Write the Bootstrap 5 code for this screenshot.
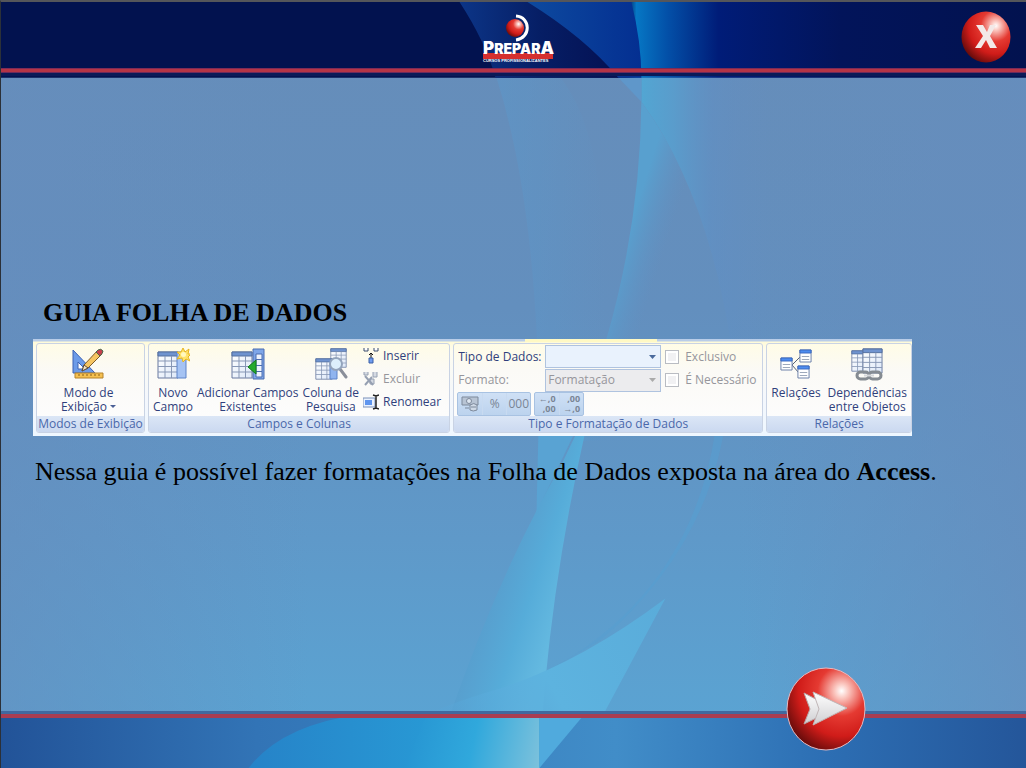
<!DOCTYPE html>
<html lang="pt-BR">
<head>
<meta charset="utf-8">
<meta name="viewport" content="width=device-width, initial-scale=1">
<title>Guia Folha de Dados</title>
<link href="https://cdn.jsdelivr.net/npm/bootstrap@5.3.0/dist/css/bootstrap.min.css" rel="stylesheet">
<style>
  body { font-family: "Liberation Serif", serif; color: #000; background: #5f96c6; }
  .page { border-top: 2px solid #55565a; border-left: 1px solid #2b3038; box-shadow: inset 1px 0 #8fabd0, inset -1px 0 #a9bedb; isolation: isolate; }
  .backdrop { inset: 0; z-index: -1; }
  .top-bar { height: 74px; padding: 9px 15px 0 23px; border-bottom: 3px solid #0a1a58; }
  .top-bar > * { flex: 1 1 0; }
  .top-rule { height: 5px; background: linear-gradient(#7d2b57 1px, #b43446 1px, #b43446 4px, #6d2a5c 4px); bottom: 0; left: 0; right: 0; }
  .bottom-bar { height: 57px; border-top: 3px solid #41699f; }
  .bottom-rule { height: 4px; background: #aa3d51; }
  .round-btn { background: none; border: 0; padding: 0; line-height: 0; }
  .next-btn { right: 160px; bottom: 17px; }
  .content { padding: 0 33px 2px 32px; }
  .lesson-title { font-size: 26px; line-height: 30px; padding-left: 10px; margin: 0 0 11px; font-weight: 700; }
  .lesson-text { font-size: 26px; line-height: 32px; margin: 20px 0 0 2px; }
  .ribbon { max-width: 879px; padding: 4px 0 3px 3px; gap: 3px; background: linear-gradient(#b9cde8 2px, #fffbd8 3px, #fdfcf0 12px, #f4f7fc 60%, #eef7ff); font: 12px/14px "Open Sans", "Noto Sans", sans-serif; color: #2f3f7c; }
  .ribbon:before { content: ""; position: absolute; top: 0; left: 56%; width: 15%; height: 3px; background: #fff9c4; }
  .group { border: 1px solid #c9d3e4; border-radius: 3px; background: linear-gradient(#fffce6, #fbfaf6 30%, #fdfdfe); overflow: hidden; }
  .group-body { height: 72px; }
  .group-name { height: 16px; line-height: 16px; background: linear-gradient(#dbe6f6, #cbd9f0); color: #4a68aa; text-align: center; }
  .g1 { flex: 108 1 0; } .g2 { flex: 303 1 0; } .g3 { flex: 311 1 0; } .g4 { flex: 145 1 0; }
  .group button { border: 0; background: none; padding: 0; color: inherit; font: inherit; white-space: nowrap; }
  .group button:disabled, .off { color: #96969c; }
  .big { padding-top: 4px !important; }
  .big svg { display: block; margin: 0 auto 6px; }
  .small-cmds { padding-top: 1px; }
  .small-cmds button { height: 23px; display: flex; align-items: center; gap: 4px; }
  .fields { display: grid; grid-template-columns: 87px 116px 1fr; grid-template-rows: 24px 23px; align-items: center; padding: 1px 0 0 4px; }
  .fields select { appearance: none; width: 116px; height: 23px; padding: 0 2px; border: 1px solid #afc3df; border-radius: 0; font: inherit; color: inherit; background: #e9f2fd url("data:image/svg+xml,%3Csvg xmlns='http://www.w3.org/2000/svg' width='7' height='4'%3E%3Cpath d='M0 0h7L3.500 4z' fill='%234a6a9c'/%3E%3C/svg%3E") no-repeat right 4px center; }
  .fields select:disabled { color: #96969c; opacity: 1; background-color: #ececee; background-image: url("data:image/svg+xml,%3Csvg xmlns='http://www.w3.org/2000/svg' width='7' height='4'%3E%3Cpath d='M0 0h7L3.500 4z' fill='%23aaaaaa'/%3E%3C/svg%3E"); }
  .tick { gap: 6px; padding-left: 4px; color: #96969c; }
  .tick input { appearance: none; width: 14px; height: 14px; margin: 0; border: 1px solid #b9bcc2; background: #f1f1f3; box-shadow: inset 0 0 0 2px #fff; }
  .formats { gap: 3px; padding-left: 3px; }
  .formats > div { height: 24px; display: flex; border: 1px solid #a8c2e2; border-radius: 2px; background: linear-gradient(#cfe0f5, #bcd3ee); }
  .formats button { width: 24px; display: flex; align-items: center; justify-content: center; color: #7a8595 !important; }
  .formats button + button { border-left: 1px solid #c8daf0; }
  .formats .digits { font-size: 9px; line-height: 10px; font-weight: 700; text-align: right; display: block; }
</style>
</head>
<body>
<svg width="0" height="0" class="position-absolute" aria-hidden="true">
  <defs>
    <radialGradient id="ball" cx=".7" cy=".28" r=".85">
      <stop offset="0" stop-color="#fff"/><stop offset=".1" stop-color="#fbc9c2"/><stop offset=".36" stop-color="#e53a32"/><stop offset=".65" stop-color="#d01c19"/><stop offset="1" stop-color="#4d0808"/>
    </radialGradient>
    <linearGradient id="steel" x1="0" x2="0" y1="0" y2="1"><stop offset="0" stop-color="#fff"/><stop offset="1" stop-color="#cfcfd2"/></linearGradient>
    <linearGradient id="paper" x1="0" x2="1" y1="0" y2="1"><stop offset="0" stop-color="#fff"/><stop offset="1" stop-color="#dde8f8"/></linearGradient>
    <symbol id="grid" viewBox="0 0 22 28" preserveAspectRatio="none">
      <path d="M1 1h20v26H1z" fill="url(#paper)" stroke="#68799f"/><path d="M1 1h20v4H1z" fill="#6f93cf" stroke="#54709f"/>
      <path d="M1 10h20M1 15.500h20M1 21h20M8 5v22M14.500 5v22" stroke="#8797b5"/>
    </symbol>
    <symbol id="win" viewBox="0 0 14 14" preserveAspectRatio="none"><path d="M1 1h12v12H1z" fill="#fff" stroke="#6a7fa8"/><path d="M1 1h12v3H1z" fill="#4d8df0" stroke="#3a68c0"/><path d="M3 7.500h8M3 10.500h8" stroke="#9aa6b8"/></symbol>
  </defs>
</svg>

<div class="page min-vh-100 d-flex flex-column position-relative">
  <svg class="backdrop position-absolute w-100 h-100" viewBox="0 0 1026 768" preserveAspectRatio="none" aria-hidden="true">
    <defs>
      <linearGradient id="sky" x1="0" x2="0" y1="0" y2="1"><stop offset="0" stop-color="#668db9"/><stop offset=".4" stop-color="#638fbe"/><stop offset=".7" stop-color="#5f99c9"/><stop offset="1" stop-color="#59a6d5"/></linearGradient>
      <linearGradient id="side"><stop offset="0" stop-color="#668dbd" stop-opacity=".6"/><stop offset=".3" stop-color="#668dbd" stop-opacity="0"/><stop offset=".72" stop-color="#668dbd" stop-opacity="0"/><stop offset="1" stop-color="#668dbd" stop-opacity=".7"/></linearGradient>
      <linearGradient id="night" gradientUnits="userSpaceOnUse" x1="0" x2="1026" y1="0" y2="0"><stop offset="0" stop-color="#02124f"/><stop offset=".61" stop-color="#02124f"/><stop offset=".62" stop-color="#0677c4"/><stop offset=".65" stop-color="#0350a8"/><stop offset=".7" stop-color="#001c78"/><stop offset=".82" stop-color="#02145a"/><stop offset="1" stop-color="#02124f"/></linearGradient>
      <linearGradient id="wedge" x1="0" x2="1" y1="0" y2="0"><stop offset="0" stop-color="#0c3587"/><stop offset=".5" stop-color="#061e65"/><stop offset="1" stop-color="#041052"/></linearGradient>
      <linearGradient id="blue" x1="0" x2="1" y1="0" y2="0"><stop offset="0" stop-color="#0d4a9f"/><stop offset="1" stop-color="#042f91"/></linearGradient>
      <linearGradient id="glow" gradientUnits="userSpaceOnUse" x1="641" x2="770" y1="0" y2="0"><stop offset="0" stop-color="#52a6d3"/><stop offset=".25" stop-color="#57a0d0" stop-opacity=".8"/><stop offset=".55" stop-color="#5f90c6" stop-opacity=".5"/><stop offset="1" stop-color="#638dc2" stop-opacity="0"/></linearGradient>
      <linearGradient id="streak"><stop offset="0" stop-color="#5b98cb" stop-opacity=".5"/><stop offset="1" stop-color="#5b98cb" stop-opacity="0"/></linearGradient>
      <linearGradient id="band" gradientUnits="userSpaceOnUse" x1="622" x2="660" y1="250" y2="262"><stop offset="0" stop-color="#58a0cf"/><stop offset="1" stop-color="#5e93c6" stop-opacity="0"/></linearGradient>
      <linearGradient id="sail" gradientUnits="userSpaceOnUse" x1="470" x2="560" y1="580" y2="610"><stop offset="0" stop-color="#5797c8" stop-opacity=".7"/><stop offset=".65" stop-color="#56acd9"/><stop offset="1" stop-color="#64b9e0"/></linearGradient>
      <linearGradient id="fin" gradientUnits="userSpaceOnUse" x1="420" x2="660" y1="730" y2="600"><stop offset="0" stop-color="#56a2d6" stop-opacity=".1"/><stop offset=".5" stop-color="#5db3df"/><stop offset="1" stop-color="#5aacda"/></linearGradient>
      <linearGradient id="floor"><stop offset="0" stop-color="#225398"/><stop offset=".25" stop-color="#3274b6"/><stop offset=".6" stop-color="#418dc8"/><stop offset=".8" stop-color="#2d6fb4"/><stop offset="1" stop-color="#24569a"/></linearGradient>
      <linearGradient id="pool" gradientUnits="userSpaceOnUse" x1="250" x2="450" y1="0" y2="0"><stop offset="0" stop-color="#2683c8"/><stop offset="1" stop-color="#289bd6"/></linearGradient>
      <linearGradient id="foam" gradientUnits="userSpaceOnUse" x1="405" x2="539" y1="730" y2="760"><stop offset="0" stop-color="#2694d2"/><stop offset=".5" stop-color="#30a8dc"/><stop offset="1" stop-color="#7bc1dc"/></linearGradient>
    </defs>
    <path d="M0 0h1026v768H0z" fill="url(#sky)"/><path d="M0 76h1026v640H0z" fill="url(#side)"/>
    <path d="M496 76Q545 230 538 510L600 400Q620 150 560 76z" fill="url(#streak)"/>
    <path d="M641 76H790V338H730Q706 189 641 100z" fill="url(#glow)"/>
    <path d="M641 100Q640 220 606 338L580 440H740L730 338Q706 189 641 100z" fill="url(#band)"/>
    <path d="M618 76L641 76V100z" fill="#5f97ca"/>
    <path d="M728 338Q740 520 600 640L530 680Q690 600 715 430z" fill="#579fd0" opacity=".6"/>
    <path d="M538 430H575L536 512z" fill="#59a3d3"/>
    <path d="M585 430Q556 560 545 680L542 716H449Q500 570 560 466L577 430z" fill="url(#sail)"/>
    <path d="M665 598Q580 662 500 688Q440 706 425 716H602z" fill="url(#fin)"/>
    <path d="M0 0H1026V76H0z" fill="url(#night)"/>
    <path d="M459 0H530Q590 34 620 76H495Q485 40 459 0z" fill="url(#wedge)"/>
    <path d="M527 0H631Q641 40 641 76H618Q585 36 527 0z" fill="url(#blue)"/>
    <path d="M0 714H1026V768H0z" fill="url(#floor)"/>
    <path d="M248 768Q280 725 360 714H560L539 768z" fill="url(#pool)"/>
    <path d="M404 768L426 714H539V768z" fill="url(#foam)"/>
    <path d="M539 714H584L539 768z" fill="#50aadd"/>
  </svg>

  <header class="top-bar d-flex align-items-start position-relative">
    <span></span>
    <div class="text-center lh-1">
      <svg width="74" height="52" viewBox="0 0 74 52" role="img" aria-label="Prepara Cursos Profissionalizantes">
        <circle cx="34" cy="17" r="9" fill="url(#ball)"/>
        <path d="M35 5C50 6 50 27 35 29" fill="none" stroke="#fff" stroke-width="3"/>
        <path d="M2 42h70v6H2z" fill="#d5302f"/>
        <text x="2" y="43" font-family="Inter, Liberation Sans, sans-serif" font-weight="900" fill="#fff" font-size="17">P<tspan font-size="14">REPAR</tspan>A</text>
        <text x="2" y="51" font-family="Liberation Sans, sans-serif" font-weight="700" fill="#fff" font-size="4">CURSOS PROFISSIONALIZANTES</text>
      </svg>
    </div>
    <div class="text-end">
      <button class="round-btn" type="button" aria-label="Fechar">
        <svg width="50" height="52" viewBox="0 0 50 52"><ellipse cx="25" cy="26" rx="24.500" ry="25.500" fill="url(#ball)"/><path d="M15 14h7l4 7 3-7h6l-6 11 7 12h-7l-4-8-5 8h-6l8-12z" fill="#f3e9e8"/></svg>
      </button>
    </div>
    <div class="top-rule position-absolute"></div>
  </header>

  <main class="content flex-grow-1 d-flex flex-column justify-content-center">
    <h1 class="lesson-title">GUIA FOLHA DE DADOS</h1>

    <div class="ribbon d-flex position-relative w-100">
      <section class="group g1">
        <div class="group-body d-flex justify-content-center align-items-start pe-1">
          <button class="big" type="button">
            <svg width="34" height="32" viewBox="0 0 34 32"><path d="M2 2v23h22z" fill="#6c9be8" stroke="#3d62b4"/><path d="M7 14v7h7z" fill="#fff" stroke="#3d62b4"/><path d="M4 25h28v5H4z" fill="#f5c050" stroke="#b5822a"/><path d="M8 26v2M12 26v2M16 26v2M20 26v2M24 26v2M28 26v2" stroke="#8a601a"/><path d="M11 23l2-6L27 2l4 4L17 20z" fill="#f6c562" stroke="#7d5a2a"/><path d="M11 23l2-6 4 3z" fill="#f7e3c0" stroke="#5a4a3a"/><path d="M25 4l2-2q3-2 5 1 0 2-3 5z" fill="#c8404c" stroke="#476a4c"/></svg>
            Modo de<br>Exibição <svg class="d-inline m-0" width="6" height="8" viewBox="0 0 6 8"><path d="M0 2h6L3 5z" fill="#4a5f95"/></svg>
          </button>
        </div>
        <div class="group-name">Modos de Exibição</div>
      </section>

      <section class="group g2">
        <div class="group-body d-flex justify-content-between align-items-start ps-1 pe-2">
          <button class="big" type="button">
            <svg width="34" height="32" viewBox="0 0 34 32"><use href="#grid" x="1" y="3" width="22" height="28"/><path d="M21 4h9v26h-9z" fill="#a5c3f3" stroke="#5c83c8"/><path d="M27 0l2 4 4-3-1 5h3l-3 3 2 4-4-2-3 3-1-4-5 1 3-4-3-3 4 0z" fill="#ffe36b" stroke="#e6b520"/><circle cx="27.500" cy="6.500" r="2.500" fill="#fff8c0"/></svg>
            Novo<br>Campo
          </button>
          <button class="big" type="button">
            <svg width="36" height="32" viewBox="0 0 36 32"><use href="#grid" x="1" y="3" width="22" height="28"/><path d="M23 1h11v30H23z" fill="#7ea6e8" stroke="#4b6db0"/><path d="M26 6h6v23h-6z" fill="#eef4fd" stroke="#4b6db0"/><path d="M26 11.500h6M26 17.500h6M26 23.500h6" stroke="#4b6db0"/><path d="M26 12v14l-8-7z" fill="#25ab2e" stroke="#127a1a"/></svg>
            Adicionar Campos<br>Existentes
          </button>
          <button class="big" type="button">
            <svg width="34" height="32" viewBox="0 0 34 32"><use href="#grid" x="16" y="0" width="17" height="20"/><use href="#grid" x="1" y="10" width="18" height="22"/><path d="M16 13h7v18h-7z" fill="#8fb4ef" stroke="#5c83c8"/><path d="M26 21l6 8" stroke="#8a8f9a" stroke-width="3" stroke-linecap="round"/><circle cx="22" cy="16" r="6" fill="#dceffc" stroke="#93a4bc" stroke-width="2"/></svg>
            Coluna de<br>Pesquisa
          </button>
          <div class="small-cmds">
            <button type="button"><svg width="16" height="16" viewBox="0 0 16 16"><path d="M1 0v3h4V0M11 0v3h4V0" fill="#fff" stroke="#3b4c6c"/><path d="M8 11V5M6 7l2-2 2 2" fill="none" stroke="#111"/><path d="M6 10h4v5H6z" fill="#6f9cf0" stroke="#3b5fa5"/></svg>Inserir</button>
            <button type="button" disabled><svg width="16" height="16" viewBox="0 0 16 16" fill="none" stroke="#96a0b2"><path d="M1 1v3h4V1M10 1v5h4V1M7 8h4v5H7z" fill="#d4d9e2"/><path d="M2 5l8 9M9 6l-7 8" stroke-width="2"/></svg>Excluir</button>
            <button type="button"><svg width="16" height="16" viewBox="0 0 16 16"><path d="M0 4h12v9H0z" fill="#eaf2ff" stroke="#7a90b8"/><path d="M2 6h7v5H2z" fill="#5f95ee"/><path d="M10 1l3 1 3-1M10 15l3-1 3 1M13 2v12" fill="none" stroke="#222" stroke-width="1.500"/></svg>Renomear</button>
          </div>
        </div>
        <div class="group-name">Campos e Colunas</div>
      </section>

      <section class="group g3">
        <div class="group-body">
          <div class="fields">
            <label for="tipo">Tipo de Dados:</label>
            <select id="tipo"><option></option></select>
            <div class="tick d-flex align-items-center"><input type="checkbox" id="exc" disabled><label for="exc">Exclusivo</label></div>
            <label for="formato" class="off">Formato:</label>
            <select id="formato" disabled><option>Formatação</option></select>
            <div class="tick d-flex align-items-center"><input type="checkbox" id="nec" disabled><label for="nec">É Necessário</label></div>
          </div>
          <div class="formats d-flex">
            <div>
              <button type="button" disabled aria-label="Moeda"><svg width="18" height="16" viewBox="0 0 18 16"><path d="M1 1h16v8H1z" fill="#b8c4d4" stroke="#7d899b"/><circle cx="8" cy="5" r="2.500" fill="#dfe7f1" stroke="#7d899b"/><path d="M9 9q4-3 7 0v5q-4 2-7 0zM4 12h4M10 11h5" fill="#cfd9e6" stroke="#7d899b"/></svg></button>
              <button type="button" disabled>%</button>
              <button type="button" disabled>000</button>
            </div>
            <div>
              <button type="button" disabled><span class="digits">←,0<br>,00</span></button>
              <button type="button" disabled><span class="digits">,00<br>→,0</span></button>
            </div>
          </div>
        </div>
        <div class="group-name">Tipo e Formatação de Dados</div>
      </section>

      <section class="group g4">
        <div class="group-body d-flex justify-content-between align-items-start px-1">
          <button class="big" type="button">
            <svg width="34" height="32" viewBox="0 0 34 32"><path d="M13 17l8-8M13 17l7 8" stroke="#555f75"/><use href="#win" x="1" y="9" width="13" height="14"/><use href="#win" x="20" y="1" width="13" height="14"/><use href="#win" x="18" y="17" width="13" height="14"/></svg>
            Relações
          </button>
          <button class="big" type="button">
            <svg width="34" height="34" class="mb-1" viewBox="0 0 34 34"><use href="#grid" x="1" y="2" width="18" height="22"/><use href="#grid" x="12" y="0" width="21" height="26"/><g fill="none" stroke="#858b92" stroke-width="3"><rect x="7" y="24" width="12" height="7" rx="3.500"/><rect x="19" y="24" width="12" height="7" rx="3.500"/></g><path d="M14 27.500h10" stroke="#d5d8db" stroke-width="2"/></svg>
            Dependências<br>entre Objetos
          </button>
        </div>
        <div class="group-name">Relações</div>
      </section>
    </div>

    <p class="lesson-text">Nessa guia é possível fazer formatações na Folha de Dados exposta na área do <strong>Access</strong>.</p>
  </main>

  <footer class="bottom-bar position-relative">
    <div class="bottom-rule"></div>
    <button class="round-btn next-btn position-absolute" type="button" aria-label="Avançar">
      <svg width="80" height="84" viewBox="0 0 80 84"><ellipse cx="40" cy="42" rx="39" ry="41" fill="url(#ball)" stroke="#e6b9c0"/><path d="M18 26l31 16-31 15 6-15z" fill="url(#steel)" stroke="#b7a5a6"/><path d="M27 25l34 16-34 17 6-16z" fill="url(#steel)" stroke="#c0b6b7"/></svg>
    </button>
  </footer>
</div>
<script src="https://cdn.jsdelivr.net/npm/bootstrap@5.3.0/dist/js/bootstrap.bundle.min.js"></script>
</body>
</html>
